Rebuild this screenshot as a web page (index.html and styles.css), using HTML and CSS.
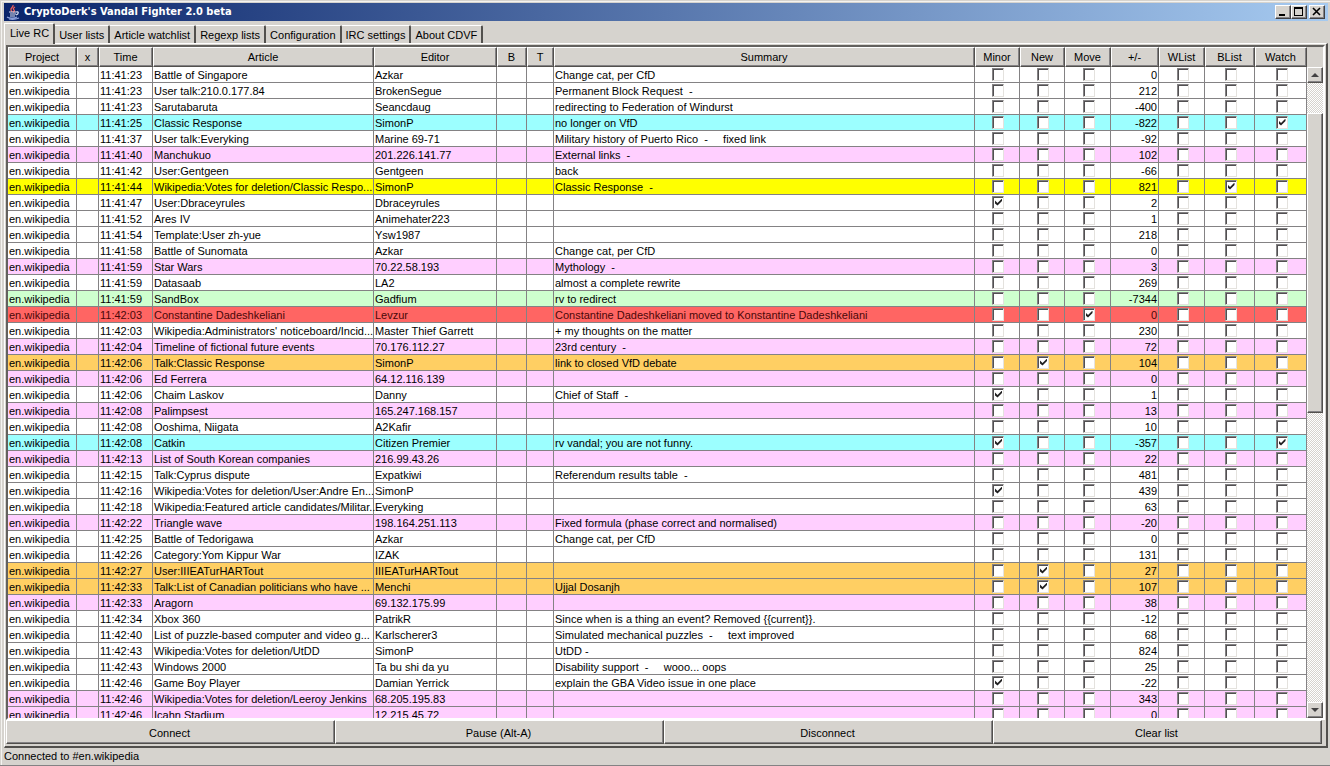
FILE: index.html
```html
<!DOCTYPE html>
<html lang="en">
<head>
<meta charset="utf-8">
<title>CryptoDerk's Vandal Fighter 2.0 beta</title>
<link rel="stylesheet" href="styles.css">
</head>
<body>
<div class="window">
  <header class="titlebar">
    <svg class="java-icon" viewBox="0 0 16 16" aria-hidden="true">
      <path d="M8 1c1 2-3 3-2 5 0 1 1 1 1 2M10 3c-2 1-2 2-1 3 1 1 0 2-1 2" fill="none" stroke="#f0605a" stroke-width="1.3"/>
      <path d="M4 8h7M5 10h6M5 12h5M11 8c3-1 3 2 0 3" fill="none" stroke="#dfe4f4" stroke-width="1.2"/>
      <path d="M2 13c2 1.500 8 1.500 10 0M4 15c3 .6 7 .3 10-1" fill="none" stroke="#8ea2dc" stroke-width="1.2"/>
    </svg>
    <h1 class="title">CryptoDerk's Vandal Fighter 2.0 beta</h1>
    <div class="controls">
      <button class="control" aria-label="Minimize"><svg viewBox="0 0 12 10"><path d="M2 7h6v2H2z"/></svg></button>
      <button class="control" aria-label="Maximize"><svg viewBox="0 0 12 10"><path d="M1 0h9v9H1zM2 2v6h7V2z" fill-rule="evenodd"/></svg></button>
      <button class="control control-close" aria-label="Close"><svg viewBox="0 0 12 10"><path d="M2 1l7 7M9 1L2 8" fill="none" stroke="#000" stroke-width="1.6"/></svg></button>
    </div>
  </header>
  <nav class="tabs" role="tablist">
    <button class="tab tab-active" role="tab" aria-selected="true">Live RC</button>
    <button class="tab" role="tab">User lists</button>
    <button class="tab" role="tab">Article watchlist</button>
    <button class="tab" role="tab">Regexp lists</button>
    <button class="tab" role="tab">Configuration</button>
    <button class="tab" role="tab">IRC settings</button>
    <button class="tab" role="tab">About CDVF</button>
  </nav>
  <main class="panel">
    <div class="scrollpane">
      <div class="viewport">
        <table class="changes">
          <colgroup>
            <col class="c-project"><col class="c-x"><col class="c-time"><col class="c-article"><col class="c-editor"><col class="c-b"><col class="c-t"><col><col class="c-minor"><col class="c-minor"><col class="c-new"><col class="c-delta"><col class="c-new"><col class="c-blist"><col class="c-watch">
          </colgroup>
          <thead>
            <tr><th>Project</th><th>x</th><th>Time</th><th>Article</th><th>Editor</th><th>B</th><th>T</th><th>Summary</th><th>Minor</th><th>New</th><th>Move</th><th>+/-</th><th>WList</th><th>BList</th><th>Watch</th></tr>
          </thead>
          <tbody id="rows"></tbody>
        </table>
      </div>
      <div class="scrollside">
        <div class="corner"></div>
        <button class="arrow" aria-label="Scroll up"><svg viewBox="0 0 8 4"><path d="M0 4l4-4 4 4z"/></svg></button>
        <div class="track">
          <div class="before"></div>
          <div class="thumb"></div>
          <div class="after"></div>
        </div>
        <button class="arrow" aria-label="Scroll down"><svg viewBox="0 0 8 4"><path d="M0 0h8L4 4z"/></svg></button>
      </div>
    </div>
    <div class="actions">
      <button class="action">Connect</button>
      <button class="action">Pause (Alt-A)</button>
      <button class="action">Disconnect</button>
      <button class="action">Clear list</button>
    </div>
  </main>
  <footer class="status">Connected to #en.wikipedia</footer>
</div>
<script src="app.js"></script>
</body>
</html>
```

FILE: styles.css
```css
* { box-sizing: border-box; }

body {
  margin: 0;
  font: 11px/15px "Liberation Sans", Arial, sans-serif;
  color: #000;
  background: #d6d3ce;
}

button {
  margin: 0;
  padding: 0;
  font: inherit;
  color: inherit;
  background: #d6d3ce;
  border: 0 solid;
}

.window {
  display: flex;
  flex-direction: column;
  height: 100vh;
  padding: 3px 2px 0 4px;
  border-bottom: 1px solid #848284;
  box-shadow: inset 1px 1px #d6d3ce, inset 2px 2px #f4f3f0;
}

.titlebar {
  display: flex;
  align-items: center;
  height: 18px;
  flex: none;
  padding: 0 3px 0 1px;
  background: linear-gradient(to right, #0a246a, #a6caf0);
}
.java-icon { width: 16px; height: 16px; }
.title {
  flex: 1;
  margin: 0 0 0 3px;
  font: bold 11px/18px "DejaVu Sans Condensed", "DejaVu Sans", sans-serif;
  color: #fff;
}
.controls { display: flex; }
.control {
  display: flex;
  width: 16px;
  height: 14px;
  padding: 1px;
  border-width: 1px;
  border-color: #fff #424142 #424142 #fff;
  box-shadow: inset -1px -1px #848284;
}
.control svg { width: 12px; height: 10px; }
.control-close { margin-left: 2px; }

.tabs {
  display: flex;
  align-items: flex-end;
  flex: none;
  height: 22px;
}
.tab {
  height: 18px;
  padding: 2px 4px 0;
  border-width: 1px 2px 0 0;
  border-color: #fff #52504d;
  border-top-right-radius: 2px;
}
.tab-active {
  position: relative;
  height: 21px;
  margin-bottom: -1px;
  padding: 0 4px 1px 5px;
  border-width: 1px 2px 0 1px;
  border-color: #fff #52504d #fff #fff;
}

.panel {
  display: flex;
  flex-direction: column;
  flex: 1;
  min-height: 0;
  padding: 1px 1px 2px;
  border: solid;
  border-width: 1px 2px 2px 1px;
  border-color: #fff #52504d #52504d #fff;
}
.scrollpane {
  display: flex;
  flex: 1;
  min-height: 0;
  border: 2px solid;
  border-color: #63615e #fff #fff #63615e;
}
.viewport {
  flex: 1;
  min-width: 0;
  overflow: hidden;
  background: #fff;
}

.changes {
  width: 100%;
  table-layout: fixed;
  border-collapse: separate;
  border-spacing: 0;
}
.c-project { width: 69px; }
.c-x { width: 22px; }
.c-time { width: 54px; }
.c-article { width: 221px; }
.c-editor { width: 123px; }
.c-b { width: 30px; }
.c-t { width: 27px; }
.c-minor { width: 45px; }
.c-new { width: 46px; }
.c-delta { width: 48px; }
.c-blist { width: 50px; }
.c-watch { width: 52px; }

.changes th {
  height: 20px;
  padding: 0 1px 0 0;
  font-weight: normal;
  background: #d6d3ce;
  border: 1px solid;
  border-color: #fff #52504d #52504d #fff;
  box-shadow: inset -1px -1px #848284;
}
.changes td {
  height: 16px;
  padding: 2px 0 0 1px;
  line-height: 13px;
  white-space: pre;
  border: solid #848284;
  border-width: 0 1px 1px 0;
}
.changes .delta { padding-right: 1px; text-align: right; }
.changes .flag { padding: 0 0 0 2px; }

.anon { background: #ffcfff; }
.watched { background: #9cffff; }
.blacklisted { background: #ffff00; }
.whitelisted { background: #ceffce; }
.moved { background: #ff6563; }
.created { background: #ffcf63; }
.moved td { color: #4a0808; }

.check {
  appearance: none;
  display: block;
  width: 12px;
  height: 13px;
  margin: 0 auto 1px;
  background: #fff;
  border: 1px solid;
  border-color: #848284 #e4e2de #e4e2de #848284;
  box-shadow: inset 1px 1px #525052;
}
.check:checked::before {
  content: "";
  display: block;
  width: 7px;
  height: 7px;
  margin: 2px;
  background: #212021;
  clip-path: polygon(0 29%, 0 71%, 36% 100%, 100% 36%, 100% 0, 36% 64%);
}

.scrollside {
  display: flex;
  flex-direction: column;
  flex: none;
  width: 16px;
}
.corner { height: 20px; background: #d6d3ce; }
.arrow {
  display: flex;
  align-items: center;
  justify-content: center;
  height: 16px;
  border-width: 1px;
  border-color: #fff #52504d #52504d #fff;
  box-shadow: inset -1px -1px #848284;
}
.arrow svg { width: 8px; height: 4px; fill: #424142; }
.track {
  display: flex;
  flex-direction: column;
  flex: 1;
  background: repeating-conic-gradient(#d6d3ce 0 25%, #fff 0 50%) 0 0 / 2px 2px;
}
.before { flex: 30; }
.thumb {
  flex: 299;
  background: #d6d3ce;
  border: 1px solid;
  border-color: #fff #52504d #52504d #fff;
  box-shadow: inset -1px -1px #848284;
}
.after { flex: 290; }

.actions {
  display: grid;
  grid-template-columns: repeat(4, 1fr);
  flex: none;
  margin-right: 3px;
}
.action {
  height: 24px;
  padding: 2px 2px 0 0;
  border-width: 1px;
  border-color: #fff #52504d #52504d #fff;
  box-shadow: inset -1px -1px #848284;
}

.status {
  flex: none;
  height: 17px;
  line-height: 17px;
}
```

FILE: app.js
```js
// time | article | editor | summary | size change | row class | ticked flags
const changes = `
11:41:23|Battle of Singapore|Azkar|Change cat, per CfD|0||
11:41:23|User talk:210.0.177.84|BrokenSegue|Permanent Block Request  -|212||
11:41:23|Sarutabaruta|Seancdaug|redirecting to Federation of Windurst|-400||
11:41:25|Classic Response|SimonP|no longer on VfD|-822|watched|watch
11:41:37|User talk:Everyking|Marine 69-71|Military history of Puerto Rico  -     fixed link|-92||
11:41:40|Manchukuo|201.226.141.77|External links  -|102|anon|
11:41:42|User:Gentgeen|Gentgeen|back|-66||
11:41:44|Wikipedia:Votes for deletion/Classic Respo...|SimonP|Classic Response  -|821|blacklisted|blist
11:41:47|User:Dbraceyrules|Dbraceyrules||2||minor
11:41:52|Ares IV|Animehater223||1||
11:41:54|Template:User zh-yue|Ysw1987||218||
11:41:58|Battle of Sunomata|Azkar|Change cat, per CfD|0||
11:41:59|Star Wars|70.22.58.193|Mythology  -|3|anon|
11:41:59|Datasaab|LA2|almost a complete rewrite|269||
11:41:59|SandBox|Gadfium|rv to redirect|-7344|whitelisted|
11:42:03|Constantine Dadeshkeliani|Levzur|Constantine Dadeshkeliani moved to Konstantine Dadeshkeliani|0|moved|move
11:42:03|Wikipedia:Administrators' noticeboard/Incid...|Master Thief Garrett|+ my thoughts on the matter|230||
11:42:04|Timeline of fictional future events|70.176.112.27|23rd century  -|72|anon|
11:42:06|Talk:Classic Response|SimonP|link to closed VfD debate|104|created|new
11:42:06|Ed Ferrera|64.12.116.139||0|anon|
11:42:06|Chaim Laskov|Danny|Chief of Staff  -|1||minor
11:42:08|Palimpsest|165.247.168.157||13|anon|
11:42:08|Ooshima, Niigata|A2Kafir||10||
11:42:08|Catkin|Citizen Premier|rv vandal; you are not funny.|-357|watched|minor watch
11:42:13|List of South Korean companies|216.99.43.26||22|anon|
11:42:15|Talk:Cyprus dispute|Expatkiwi|Referendum results table  -|481||
11:42:16|Wikipedia:Votes for deletion/User:Andre En...|SimonP||439||minor
11:42:18|Wikipedia:Featured article candidates/Militar...|Everyking||63||
11:42:22|Triangle wave|198.164.251.113|Fixed formula (phase correct and normalised)|-20|anon|
11:42:25|Battle of Tedorigawa|Azkar|Change cat, per CfD|0||
11:42:26|Category:Yom Kippur War|IZAK||131||
11:42:27|User:IIIEATurHARTout|IIIEATurHARTout||27|created|new
11:42:33|Talk:List of Canadian politicians who have ...|Menchi|Ujjal Dosanjh|107|created|new
11:42:33|Aragorn|69.132.175.99||38|anon|
11:42:34|Xbox 360|PatrikR|Since when is a thing an event? Removed {{current}}.|-12||
11:42:40|List of puzzle-based computer and video g...|Karlscherer3|Simulated mechanical puzzles  -     text improved|68||
11:42:43|Wikipedia:Votes for deletion/UtDD|SimonP|UtDD -|824||
11:42:43|Windows 2000|Ta bu shi da yu|Disability support  -     wooo... oops|25||
11:42:46|Game Boy Player|Damian Yerrick|explain the GBA Video issue in one place|-22||minor
11:42:46|Wikipedia:Votes for deletion/Leeroy Jenkins|68.205.195.83||343|anon|
11:42:46|Icahn Stadium|12.215.45.72||0|anon|`.trim().split("\n");

const body = document.getElementById("rows");

for (const line of changes) {
  const [time, article, editor, summary, delta, kind, ticked] = line.split("|");
  const row = body.insertRow();
  row.className = kind;

  const addText = (text, className = "") => {
    const cell = row.insertCell();
    cell.textContent = text;
    cell.className = className;
  };
  const addFlag = (name) => {
    const cell = row.insertCell();
    const box = document.createElement("input");
    box.type = "checkbox";
    box.className = "check";
    box.checked = ticked.split(" ").includes(name);
    box.setAttribute("aria-label", name + ": " + article);
    cell.className = "flag";
    cell.append(box);
  };

  ["en.wikipedia", "", time, article, editor, "", "", summary].forEach((text) => addText(text));
  ["minor", "new", "move"].forEach(addFlag);
  addText(delta, "delta");
  ["wlist", "blist", "watch"].forEach(addFlag);
}
```
